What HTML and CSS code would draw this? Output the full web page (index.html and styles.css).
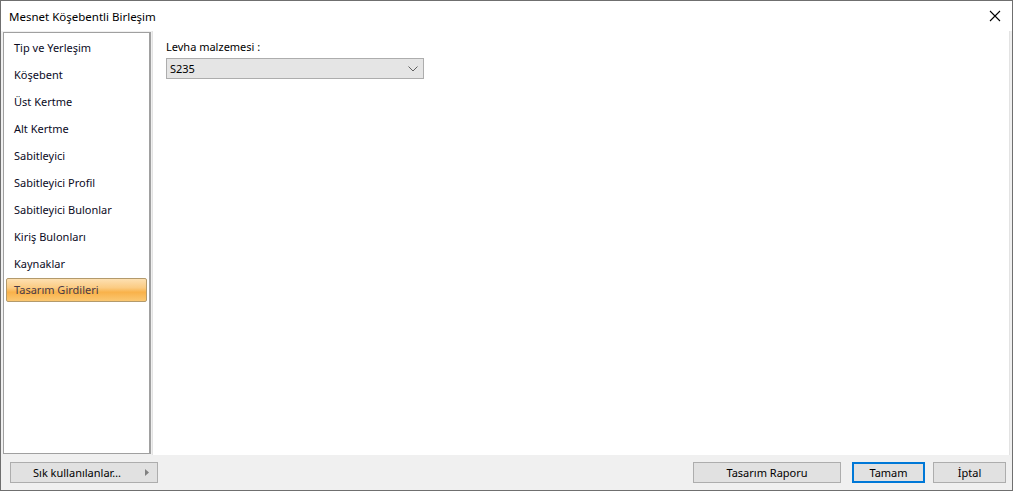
FILE: index.html
```html
<!DOCTYPE html>
<html>
<head>
<meta charset="utf-8">
<link rel="stylesheet" href="styles.css">
</head>
<body>
<div class="window">
  <div class="titlebar">
    <span class="title">Mesnet Köşebentli Birleşim</span>
    <svg class="close" width="12" height="12" viewBox="0 0 12 12"><path d="M1 1 L11 11 M11 1 L1 11" stroke="#000" stroke-width="1.1" fill="none"/></svg>
  </div>
  <div class="main">
    <div class="nav">
      <div class="item">Tip ve Yerleşim</div>
      <div class="item">Köşebent</div>
      <div class="item">Üst Kertme</div>
      <div class="item">Alt Kertme</div>
      <div class="item">Sabitleyici</div>
      <div class="item">Sabitleyici Profil</div>
      <div class="item">Sabitleyici Bulonlar</div>
      <div class="item">Kiriş Bulonları</div>
      <div class="item">Kaynaklar</div>
      <div class="item selected">Tasarım Girdileri</div>
    </div>
    <div class="content">
      <div class="label">Levha malzemesi :</div>
      <div class="combo">
        <span>S235</span>
        <svg width="10" height="6" viewBox="0 0 10 6"><path d="M0.5 0.5 L5 5 L9.5 0.5" stroke="#606060" stroke-width="1" fill="none"/></svg>
      </div>
    </div>
  </div>
  <div class="footer">
    <div class="btn fav"><span>Sık kullanılanlar…</span><svg width="4" height="7" viewBox="0 0 4 7"><path d="M0 0 L4 3.5 L0 7 Z" fill="#808080"/></svg></div>
    <div class="spacer"></div>
    <div class="btn report">Tasarım Raporu</div>
    <div class="btn ok">Tamam</div>
    <div class="btn cancel">İptal</div>
  </div>
</div>
</body>
</html>
```
FILE: styles.css
```css
* { box-sizing: border-box; }
html, body { margin: 0; padding: 0; }
body {
  width: 1013px;
  height: 491px;
  font-family: "Segoe UI", "Noto Sans", sans-serif;
  font-size: 11px;
  color: #000;
  overflow: hidden;
}
.window {
  width: 1013px;
  height: 491px;
  border: 1px solid #6f6f6f;
  background: #f0f0f0;
  display: flex;
  flex-direction: column;
}
.titlebar {
  height: 30px;
  background: #fff;
  display: flex;
  align-items: center;
  justify-content: space-between;
  padding: 0 10px 0 8px;
  flex: none;
}
.title { font-size: 11.5px; color: #000; }
.close { margin-right: 1px; }
.main {
  flex: none;
  height: 424px;
  display: flex;
}
.nav {
  margin: 1px 0 0 2px;
  width: 148px;
  height: 422px;
  background: #fff;
  border: 1px solid #a0a0a0;
  border-right: 2px solid #a0a0a0;
  padding-top: 1px;
  display: flex;
  flex-direction: column;
}
.item {
  height: 27px;
  line-height: 27px;
  padding-left: 10px;
  white-space: nowrap;
  color: #0a0a1e;
}
.item.selected {
  margin: 1px 2px 0 2px;
  height: 24px;
  line-height: 22px;
  padding-left: 7px;
  border: 1px solid #b39a6c;
  border-radius: 2px;
  color: #4a3a46;
  background: linear-gradient(to bottom, #fde0b2 0%, #fbcb82 40%, #f9b24a 60%, #fbc872 100%);
}
.content {
  margin-left: 1px;
  width: 858px;
  background: #fff;
  border-left: 1px solid #e3e3e3;
  border-right: 1px solid #e3e3e3;
  padding: 7px 0 0 13px;
}
.label { height: 20px; line-height: 18px; color: #000; }
.combo {
  width: 258px;
  height: 21px;
  background: #e5e5e5;
  border: 1px solid #adadad;
  display: flex;
  align-items: center;
  justify-content: space-between;
  padding: 0 4px 0 3px;
}
.combo svg { margin-right: 1px; }
.footer {
  flex: 1;
  display: flex;
  align-items: flex-start;
  padding: 7px 6px 0 9px;
}
.spacer { flex: 1; }
.btn {
  height: 21px;
  background: #e1e1e1;
  border: 1px solid #adadad;
  display: flex;
  align-items: center;
  justify-content: center;
  color: #000;
}
.fav {
  width: 148px;
  justify-content: flex-start;
  padding: 0 8px 0 22px;
}
.fav span { flex: 1; }
.report { width: 148px; margin-right: 11px; }
.ok { width: 73px; border: 2px solid #0078d7; margin-right: 8px; }
.cancel { width: 73px; }
```
